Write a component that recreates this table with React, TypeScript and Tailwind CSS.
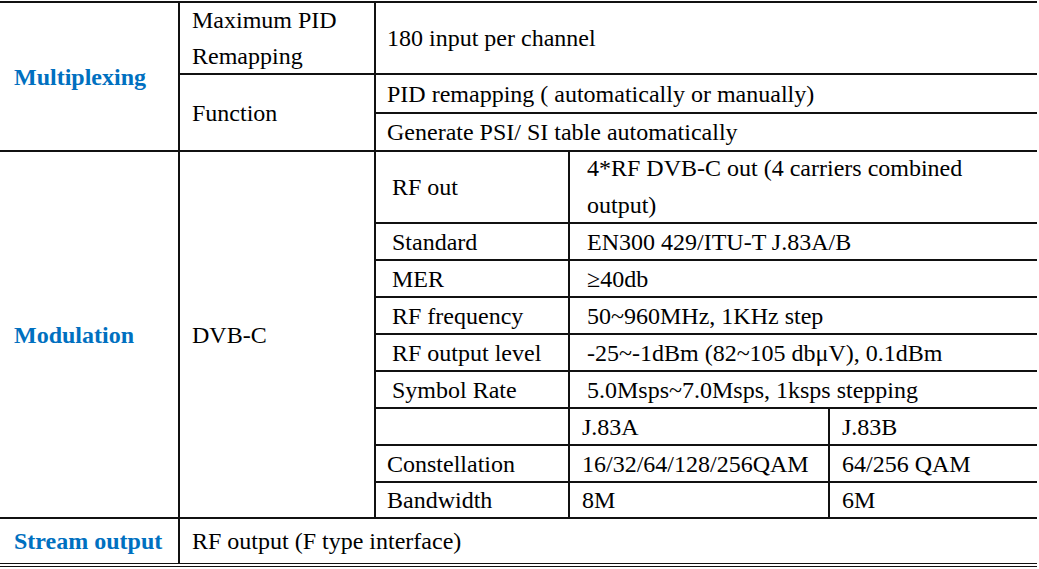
import React from "react";

interface CellProps {
  children?: React.ReactNode;
  className?: string;
}

function Cell({ children, className = "" }: CellProps) {
  return <div className={`bg-white flex items-center ${className}`}>{children}</div>;
}

function Head({ children, className = "" }: CellProps) {
  return (
    <Cell className={`pl-[14px] font-bold text-[#0070c0] ${className}`}>{children}</Cell>
  );
}

const specRows: [string, string][] = [
  ["Standard", "EN300 429/ITU-T J.83A/B"],
  ["MER", "≥40db"],
  ["RF frequency", "50~960MHz, 1KHz step"],
  ["RF output level", "-25~-1dBm (82~105 dbμV), 0.1dBm"],
  ["Symbol Rate", "5.0Msps~7.0Msps, 1ksps stepping"],
];

const qamRows: [string, string, string][] = [
  ["", "J.83A", "J.83B"],
  ["Constellation", "16/32/64/128/256QAM", "64/256 QAM"],
  ["Bandwidth", "8M", "6M"],
];

export default function App() {
  return (
    <div className="w-[1039px] h-[569px] bg-white font-[family-name:Liberation_Serif,Times_New_Roman,serif] text-[24px] leading-[36px] text-black">
      <div className="mt-[1px] w-[1037px] grid grid-cols-[178px_194px_192px_258px_207px] grid-rows-[70px_37px_36px_70px_35px_35px_35px_35px_35px_35px_35px_34px_44px] gap-[2px] bg-[#111] bg-clip-padding border-t-2 border-b-4 border-double border-[#111]">
        {/* Multiplexing */}
        <Head className="row-span-3">Multiplexing</Head>
        <Cell className="pl-[12px]">
          <span>
            Maximum PID
            <br />
            Remapping
          </span>
        </Cell>
        <Cell className="col-span-3 pl-[11px]">180 input per channel</Cell>
        <Cell className="row-span-2 pl-[12px]">Function</Cell>
        <Cell className="col-span-3 pl-[11px]">PID remapping ( automatically or manually)</Cell>
        <Cell className="col-span-3 pl-[11px]">Generate PSI/ SI table automatically</Cell>

        {/* Modulation */}
        <Head className="row-span-9">Modulation</Head>
        <Cell className="row-span-9 pl-[12px]">DVB-C</Cell>
        <Cell className="pl-[16px]">RF out</Cell>
        <Cell className="col-span-2 pl-[17px] leading-[37px]">
          <span>
            4*RF DVB-C out (4 carriers combined
            <br />
            output)
          </span>
        </Cell>
        {specRows.map(([label, value]) => (
          <React.Fragment key={label}>
            <Cell className="pl-[16px]">{label}</Cell>
            <Cell className="col-span-2 pl-[17px]">{value}</Cell>
          </React.Fragment>
        ))}
        {qamRows.map(([label, a, b], i) => (
          <React.Fragment key={i}>
            <Cell className="pl-[11px]">{label}</Cell>
            <Cell className="pl-[12px]">{a}</Cell>
            <Cell className="pl-[12px]">{b}</Cell>
          </React.Fragment>
        ))}

        {/* Stream output */}
        <Head>Stream output</Head>
        <Cell className="col-span-4 pl-[12px]">RF output (F type interface)</Cell>
      </div>
    </div>
  );
}
